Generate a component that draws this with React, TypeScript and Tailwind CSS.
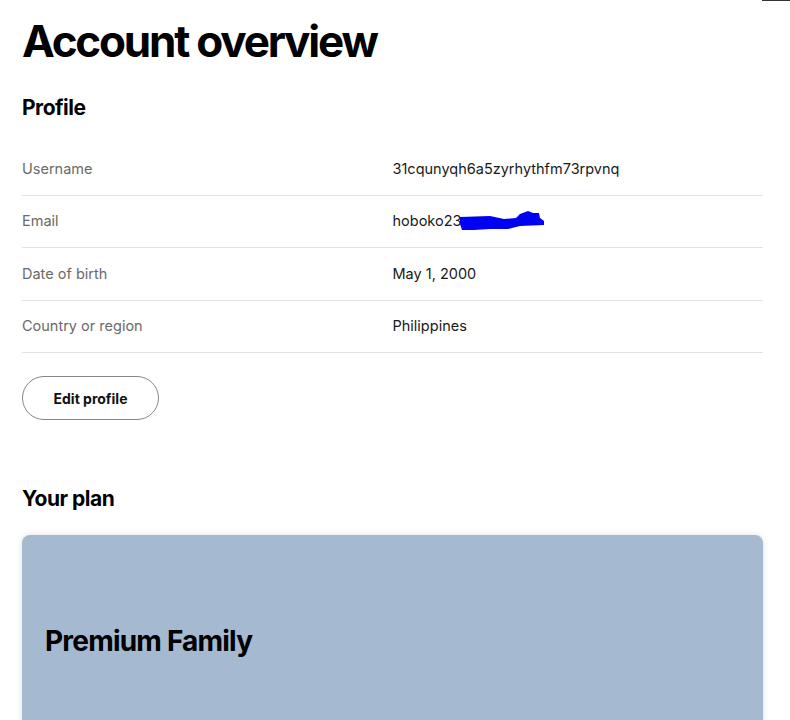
import React from "react";

const rows = [
  { label: "Username", value: "31cqunyqh6a5zyrhythfm73rpvnq" },
  { label: "Email", value: "hoboko23", scribble: true },
  { label: "Date of birth", value: "May 1, 2000" },
  { label: "Country or region", value: "Philippines" },
];

function Scribble() {
  return (
    <svg width="86" height="22" viewBox="0 0 86 22" className="-ml-[1px]">
      <path
        d="M0 7 L30 6 L44 9 L56 8 L60 4 L68 1 L73 3 L79 3 L80 8 L84 11 L84 15 L60 16 L48 19 L30 19 L14 20 L2 20 L0 14 Z"
        fill="#0000f5"
      />
    </svg>
  );
}

export default function App() {
  return (
    <div
      className="relative h-[720px] w-[790px] overflow-hidden bg-white px-[22px] text-black"
      style={{ fontFamily: "Inter, 'Noto Sans', sans-serif" }}
    >
      {/* stray line top right */}
      <div className="absolute right-0 top-0 h-[1px] w-[28px] bg-[#333]" />

      <h1 className="pt-[17px] text-[44px] font-bold leading-[48px] tracking-[-2.2px]">
        Account overview
      </h1>

      <h2 className="mt-[30px] text-[21px] font-bold leading-[26px] tracking-[-0.5px]">
        Profile
      </h2>

      {/* Profile rows */}
      <div className="mt-[22px] w-[741px]">
        {rows.map((r) => (
          <div
            key={r.label}
            className="grid h-[52.5px] grid-cols-2 items-center border-b border-[#e2e2e2] text-[14.5px]"
          >
            <span className="text-[#6a6a6a]">{r.label}</span>
            <span className="flex items-center text-[#1a1a1a]">
              {r.value}
              {r.scribble && <Scribble />}
            </span>
          </div>
        ))}
      </div>

      <button className="mt-[23px] flex h-[44px] w-[137px] items-center justify-center rounded-full border border-[#878787] text-[14px] font-bold text-[#111]">
        Edit profile
      </button>

      <h2 className="mt-[66px] text-[21px] font-bold leading-[26px] tracking-[-0.5px]">
        Your plan
      </h2>

      <div className="mt-[23px] flex h-[220px] w-[741px] items-start rounded-lg bg-[#a5b9d1] px-[23px] pt-[88px] shadow-[0_0_6px_rgba(0,0,0,0.12)]">
        <span className="text-[28px] font-bold leading-[36px] tracking-[-0.8px]">
          Premium Family
        </span>
      </div>
    </div>
  );
}
